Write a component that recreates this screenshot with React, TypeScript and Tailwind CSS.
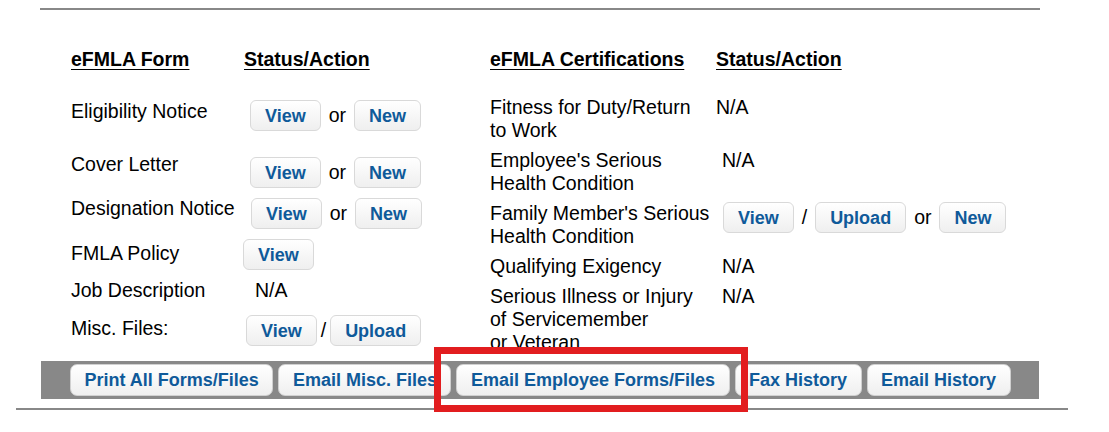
import React from "react";

const Btn = ({ children }: { children: React.ReactNode }) => (
  <span className="inline-flex h-[31px] items-center rounded-[6px] border border-[#d9d9d9] bg-linear-to-b from-white to-[#efefef] px-[14px] text-[18px] font-bold leading-none text-[#0f5a9a]">
    {children}
  </span>
);

const BarBtn = ({ children }: { children: React.ReactNode }) => (
  <span className="inline-flex h-[32px] items-center whitespace-nowrap rounded-[7px] border border-[#d0d0d0] bg-linear-to-b from-white to-[#efefef] px-[13.5px] text-[18px] font-bold leading-none text-[#0f5a9a]">
    {children}
  </span>
);

const Sep = ({ children, cls }: { children: React.ReactNode; cls: string }) => (
  <span className={"text-[19.5px] leading-none text-black " + cls}>{children}</span>
);

export default function App() {
  return (
    <div
      className="relative h-[432px] w-[1109px] overflow-hidden bg-white text-black"
      style={{ fontFamily: '"Liberation Sans", Arial, sans-serif' }}
    >
      <div className="ml-[40px] mt-[8px] h-[2px] w-[1000px] bg-[#888888]" />

      <div className="flex h-[351px] pt-[38px] text-[19.5px] leading-[23px]">
        {/* Left table */}
        <div className="ml-[71px] flex w-[419px] flex-col">
          <div className="flex h-[52px] items-start">
            <div className="w-[173px] font-bold underline underline-offset-[3px]">eFMLA Form</div>
            <div className="font-bold underline underline-offset-[3px]">Status/Action</div>
          </div>
          <div className="flex h-[53px] items-start">
            <div className="w-[173px]">Eligibility Notice</div>
            <div className="ml-[6px] flex h-[31px] items-center">
              <Btn>View</Btn>
              <Sep cls="mx-[8px]">or</Sep>
              <Btn>New</Btn>
            </div>
          </div>
          <div className="flex h-[44px] items-start">
            <div className="w-[173px]">Cover Letter</div>
            <div className="ml-[6px] mt-[4px] flex h-[31px] items-center">
              <Btn>View</Btn>
              <Sep cls="mx-[8px]">or</Sep>
              <Btn>New</Btn>
            </div>
          </div>
          <div className="flex h-[41px] items-start">
            <div className="w-[173px]">Designation Notice</div>
            <div className="ml-[7px] mt-[1px] flex h-[31px] items-center">
              <Btn>View</Btn>
              <Sep cls="mx-[8px]">or</Sep>
              <Btn>New</Btn>
            </div>
          </div>
          <div className="flex h-[41px] items-start">
            <div className="mt-[4px] w-[173px]">FMLA Policy</div>
            <div className="-ml-[1px] mt-[1px] flex h-[31px] items-center">
              <Btn>View</Btn>
            </div>
          </div>
          <div className="flex h-[36px] items-start">
            <div className="w-[173px]">Job Description</div>
            <div className="ml-[11px]">N/A</div>
          </div>
          <div className="flex h-[35px] items-start">
            <div className="mt-[2px] w-[173px]">Misc. Files:</div>
            <div className="ml-[2px] flex h-[31px] items-center">
              <Btn>View</Btn>
              <Sep cls="mx-[4px]">/</Sep>
              <Btn>Upload</Btn>
            </div>
          </div>
        </div>

        {/* Right table */}
        <div className="flex flex-col">
          <div className="flex h-[48px] items-start">
            <div className="w-[226px] font-bold underline underline-offset-[3px]">eFMLA Certifications</div>
            <div className="font-bold underline underline-offset-[3px]">Status/Action</div>
          </div>
          <div className="flex h-[53px] items-start">
            <div className="w-[226px] whitespace-nowrap">
              Fitness for Duty/Return
              <br />
              to Work
            </div>
            <div>N/A</div>
          </div>
          <div className="flex h-[53px] items-start">
            <div className="w-[226px] whitespace-nowrap">
              Employee's Serious
              <br />
              Health Condition
            </div>
            <div className="ml-[6px]">N/A</div>
          </div>
          <div className="flex h-[53px] items-start">
            <div className="w-[226px] whitespace-nowrap">
              Family Member's Serious
              <br />
              Health Condition
            </div>
            <div className="ml-[7px] flex h-[31px] items-center">
              <Btn>View</Btn>
              <Sep cls="mx-[8px]">/</Sep>
              <Btn>Upload</Btn>
              <Sep cls="mx-[8px]">or</Sep>
              <Btn>New</Btn>
            </div>
          </div>
          <div className="flex h-[30px] items-start">
            <div className="w-[226px] whitespace-nowrap">Qualifying Exigency</div>
            <div className="ml-[6px]">N/A</div>
          </div>
          <div className="flex h-[70px] items-start">
            <div className="w-[226px] whitespace-nowrap">
              Serious Illness or Injury
              <br />
              of Servicemember
              <br />
              or Veteran
            </div>
            <div className="ml-[6px]">N/A</div>
          </div>
        </div>
      </div>

      {/* Bottom bar */}
      <div className="ml-[41px] flex h-[38px] w-[998px] items-start gap-[5px] bg-[#888888] pl-[29px] pt-[3px]">
        <BarBtn>Print All Forms/Files</BarBtn>
        <BarBtn>Email Misc. Files</BarBtn>
        <BarBtn>Email Employee Forms/Files</BarBtn>
        <BarBtn>Fax History</BarBtn>
        <BarBtn>Email History</BarBtn>
      </div>
      <div className="ml-[16px] mt-[9px] h-[2px] w-[1052px] bg-[#888888]" />

      {/* Red annotation box */}
      <div className="absolute left-[434px] top-[347px] h-[65px] w-[314px] border-[7px] border-[#e21d1f]" />
    </div>
  );
}
